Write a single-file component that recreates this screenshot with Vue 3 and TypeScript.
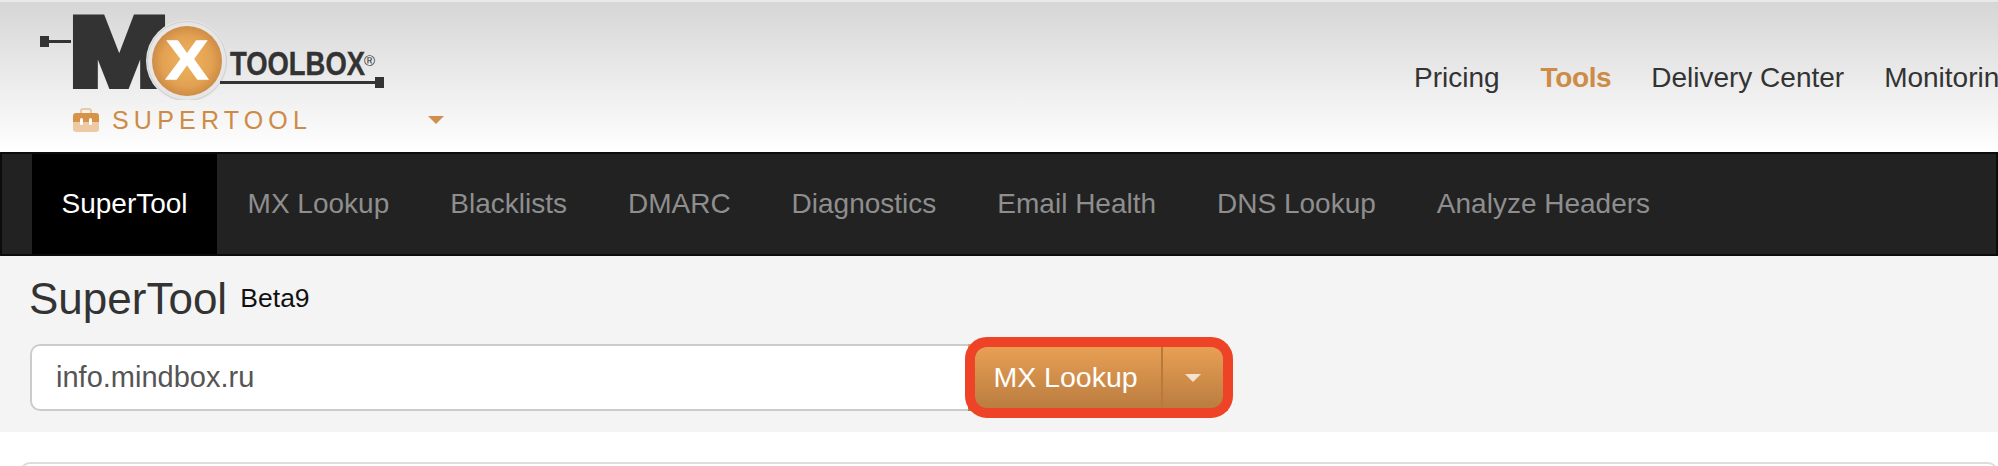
<script setup lang="ts">
const menuLinks = [
  { label: 'Pricing', active: false },
  { label: 'Tools', active: true },
  { label: 'Delivery Center', active: false },
  { label: 'Monitoring', active: false },
]

const tabs = ['SuperTool', 'MX Lookup', 'Blacklists', 'DMARC', 'Diagnostics', 'Email Health', 'DNS Lookup', 'Analyze Headers']
</script>

<template>
  <div class="page">
    <header class="site-header">
      <div class="brand">
        <svg class="logo" width="400" height="100" viewBox="0 0 400 100">
          <defs>
            <radialGradient id="coin" cx="50%" cy="50%" r="50%">
              <stop offset="0%" stop-color="#eeb35e" />
              <stop offset="70%" stop-color="#e3a253" />
              <stop offset="100%" stop-color="#cf8c45" />
            </radialGradient>
          </defs>
          <rect x="40" y="36" width="9" height="11" fill="#333" />
          <rect x="48" y="40" width="23" height="3" fill="#333" />
          <text x="70" y="85" class="logo-m" textLength="98" lengthAdjust="spacingAndGlyphs">M</text>
          <circle cx="187" cy="61" r="41" fill="#e6e6e6" />
          <circle cx="187" cy="61" r="39.5" fill="none" stroke="#cfcfcf" stroke-width="1" />
          <circle cx="187" cy="61" r="35" fill="url(#coin)" />
          <text x="166" y="79" class="logo-x" textLength="42" lengthAdjust="spacingAndGlyphs">X</text>
          <text x="230" y="75" class="logo-word" textLength="135" lengthAdjust="spacingAndGlyphs">TOOLBOX</text>
          <text x="364" y="66" class="logo-reg">®</text>
          <rect x="220" y="81" width="158" height="3" fill="#333" />
          <rect x="375" y="77" width="9" height="11" fill="#333" />
        </svg>
        <div class="tool-picker">
          <svg class="kit-icon" width="28" height="24" viewBox="0 0 28 24">
            <path d="M9 5V3a2 2 0 0 1 2-2h6a2 2 0 0 1 2 2v2" fill="none" stroke="#ecc9a3" stroke-width="2" />
            <path d="M1 14V8a3 3 0 0 1 3-3h20a3 3 0 0 1 3 3v6z" fill="#d8934b" />
            <path d="M1 14h26v7a3 3 0 0 1-3 3H4a3 3 0 0 1-3-3z" fill="#edcaa4" />
            <rect x="8" y="10" width="3" height="7" rx="1.5" fill="#fff" />
            <rect x="17" y="10" width="3" height="7" rx="1.5" fill="#fff" />
          </svg>
          <span class="tool-name">SUPERTOOL</span>
          <span class="tool-caret" />
        </div>
      </div>
      <nav class="main-menu">
        <a
          v-for="link of menuLinks"
          :key="link.label"
          :class="{ active: link.active }"
        >{{ link.label }}</a>
      </nav>
    </header>

    <nav class="tab-bar">
      <a
        v-for="(tab, index) of tabs"
        :key="tab"
        :class="{ active: index === 0 }"
      >{{ tab }}</a>
    </nav>

    <section class="lookup">
      <h1>SuperTool <small>Beta9</small></h1>
      <div class="lookup-form">
        <input
          type="text"
          value="info.mindbox.ru"
        >
        <div class="button-group">
          <button type="button" class="run">MX Lookup</button>
          <button type="button" class="more"><span /></button>
          <div class="highlight" />
        </div>
      </div>
    </section>

    <div class="results" />
  </div>
</template>

<style scoped>
.page {
  width: 1998px;
  height: 466px;
  overflow: hidden;
  font-family: "Liberation Sans", Arial, sans-serif;
  background: #fff;
}

.site-header {
  display: flex;
  box-sizing: border-box;
  height: 152px;
  border-top: 2px solid #e9e9e9;
  background: linear-gradient(#d6d6d6, #fff);
}

.brand {
  flex: 0 0 1414px;
  margin-top: -2px;
}

.logo {
  display: block;
}

.tool-picker {
  display: flex;
  align-items: center;
  margin-top: 6px;
  padding-left: 72px;
}

.kit-icon {
  flex: none;
}

.tool-name {
  width: 316px;
  margin-left: 12px;
  color: #cd8b46;
  font-size: 25px;
  line-height: 28px;
  letter-spacing: 5.2px;
}

.tool-caret {
  border-top: 8px solid #d08f4b;
  border-right: 8px solid transparent;
  border-left: 8px solid transparent;
}

.main-menu {
  display: flex;
  flex: none;
  gap: 40px;
  padding-top: 58px;
  color: #333;
  font-size: 28px;
  line-height: 36px;
}

.main-menu .active {
  margin-left: 1px;
  color: #cd8b46;
  font-weight: 700;
  letter-spacing: -0.4px;
}

.tab-bar {
  display: flex;
  box-sizing: border-box;
  height: 104px;
  border: 2px solid #0c0c0c;
  padding-left: 30px;
  background: #222;
}

.tab-bar a {
  padding: 0 30.5px;
  color: #8e8e8e;
  font-size: 28px;
  line-height: 100px;
}

.tab-bar a.active {
  padding: 0 29.5px;
  color: #fff;
  background: #000;
}

.lookup {
  box-sizing: border-box;
  height: 176px;
  padding: 16px 0 0 29px;
  background: #f4f4f4;
}

h1 {
  margin: 0;
  color: #333;
  font-size: 44px;
  font-weight: 400;
  line-height: 52px;
}

h1 small {
  margin-left: 1px;
  color: #111;
  font-size: 26.5px;
  vertical-align: 7px;
}

.lookup-form {
  display: flex;
  margin-top: 19px;
  margin-left: 1px;
}

input {
  box-sizing: border-box;
  width: 938px;
  height: 67px;
  border: 2px solid #ccc;
  border-right: 0;
  border-radius: 10px 0 0 10px;
  padding: 0 24px;
  color: #555;
  font: inherit;
  font-size: 29px;
  background: #fff;
  outline: none;
}

.button-group {
  position: relative;
  display: flex;
  height: 67px;
}

button {
  height: 67px;
  border: 0;
  padding: 0;
  color: #fff;
  font: inherit;
  background: linear-gradient(#eaa155, #b87b3f);
}

.run {
  width: 195px;
  border-right: 2px solid #b87a3a;
  padding-left: 2px;
  font-size: 28.5px;
}

.more {
  display: flex;
  align-items: center;
  justify-content: center;
  width: 65px;
  padding-right: 5px;
}

.more span {
  border-top: 8px solid #f4e2d0;
  border-right: 8px solid transparent;
  border-left: 8px solid transparent;
}

/* red annotation drawn over the button */
.highlight {
  position: absolute;
  top: -7px;
  right: -5px;
  bottom: -7px;
  left: -3px;
  box-sizing: border-box;
  border: 10px solid #ee4326;
  border-radius: 22px;
}

.results {
  box-sizing: border-box;
  height: 60px;
  margin: 30px 0 0 20px;
  border: 2px solid #ddd;
  border-radius: 10px;
}

.logo-m {
  fill: #333;
  stroke: #333;
  stroke-width: 8px;
  font-size: 96px;
  font-weight: 700;
}

.logo-x {
  fill: #fff;
  stroke: #fff;
  stroke-width: 1.5px;
  font-size: 56px;
  font-weight: 700;
}

.logo-word {
  fill: #333;
  stroke: #333;
  stroke-width: 0.4px;
  font-size: 33px;
  font-weight: 700;
}

.logo-reg {
  fill: #333;
  font-size: 15px;
}
</style>
